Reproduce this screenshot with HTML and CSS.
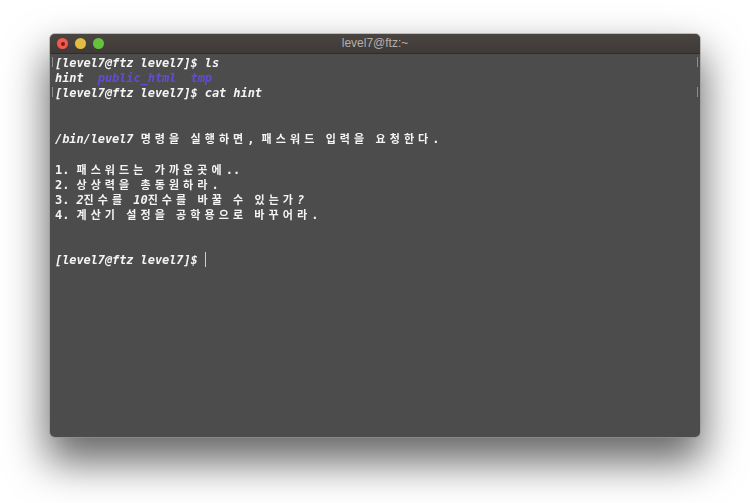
FILE: index.html
```html
<!DOCTYPE html>
<html lang="ko">
<head>
<meta charset="utf-8">
<title>level7@ftz:~</title>
<link rel="stylesheet" href="styles.css">
</head>
<body>
<div class="window">
  <header class="titlebar">
    <div class="lights">
      <span class="light close"></span>
      <span class="light min"></span>
      <span class="light max"></span>
    </div>
    <div class="title">level7@ftz:~</div>
  </header>
  <main class="term">
    <div class="line mark"><span class="i">[level7@ftz level7]$ ls</span></div>
    <div class="line"><span class="i">hint  <span class="blue">public_html</span>  <span class="blue">tmp</span></span></div>
    <div class="line mark"><span class="i">[level7@ftz level7]$ cat hint</span></div>
    <div class="line"> </div>
    <div class="line"> </div>
    <div class="line"><span class="i">/bin/level7</span> <span class="k">명령을</span> <span class="k">실행하면</span>, <span class="k">패스워드</span> <span class="k">입력을</span> <span class="k">요청한다</span>.</div>
    <div class="line"> </div>
    <div class="line">1. <span class="k">패스워드는</span> <span class="k">가까운곳에</span>..</div>
    <div class="line">2. <span class="k">상상력을</span> <span class="k">총동원하라</span>.</div>
    <div class="line">3. <span class="i">2</span><span class="k">진수를</span> <span class="i">10</span><span class="k">진수를</span> <span class="k">바꿀</span> <span class="k">수</span> <span class="k">있는가</span><span class="i">?</span></div>
    <div class="line">4. <span class="k">계산기</span> <span class="k">설정을</span> <span class="k">공학용으로</span> <span class="k">바꾸어라</span>.</div>
    <div class="line"> </div>
    <div class="line"> </div>
    <div class="line"><span class="i">[level7@ftz level7]$ </span><span class="cursor"></span></div>
  </main>
</div>
</body>
</html>
```
FILE: styles.css
```css
html, body {
  margin: 0;
  height: 100%;
  background: #fff;
  overflow: hidden;
}
body {
  padding: 34px 50px 66px;
  box-sizing: border-box;
  display: flex;
}
.window {
  flex: 1;
  display: flex;
  flex-direction: column;
  border-radius: 5px;
  background: #4c4c4c;
  box-shadow: 0 0 0 1px rgba(150, 150, 150, .55), 0 22px 42px 3px rgba(0, 0, 0, .6);
  overflow: hidden;
}
.titlebar {
  height: 19px;
  flex: none;
  display: flex;
  align-items: center;
  position: relative;
  background: linear-gradient(#4a4541, #3f3a37);
  border-bottom: 1px solid #2f2c2a;
}
.lights {
  display: flex;
  gap: 7px;
  padding-left: 7px;
}
.light {
  width: 11px;
  height: 11px;
  border-radius: 50%;
  display: flex;
  align-items: center;
  justify-content: center;
}
.close { background: #ee5a50; }
.close::after {
  content: "";
  width: 4px;
  height: 4px;
  border-radius: 50%;
  background: #7c1a14;
}
.min { background: #e2bd44; }
.max { background: #66c13f; }
.title {
  position: absolute;
  left: 0;
  right: 0;
  text-align: center;
  font: 12px/19px "Liberation Sans", sans-serif;
  color: #b4afab;
}
.term {
  flex: 1;
  padding: 2px 5px 0;
  font: bold 12px/15.1px "DejaVu Sans Mono", monospace;
  letter-spacing: -0.09px;
  color: #f4f4f4;
  filter: blur(0.25px);
}
.line {
  height: 15.1px;
  position: relative;
  white-space: pre;
}
.mark::before, .mark::after {
  content: "";
  position: absolute;
  top: 1px;
  width: 1px;
  height: 10px;
  background: #8d8d8d;
}
.mark::before { left: -3px; }
.mark::after { right: -3px; }
.i { font-style: italic; }
.blue { color: #5f4dd8; }
.k {
  font: bold 11px/15.1px "Noto Sans CJK KR", sans-serif;
  letter-spacing: 4.1px;
}
.cursor {
  display: inline-block;
  width: 1px;
  height: 15px;
  vertical-align: -3px;
  background: #d6e63c;
}
```
